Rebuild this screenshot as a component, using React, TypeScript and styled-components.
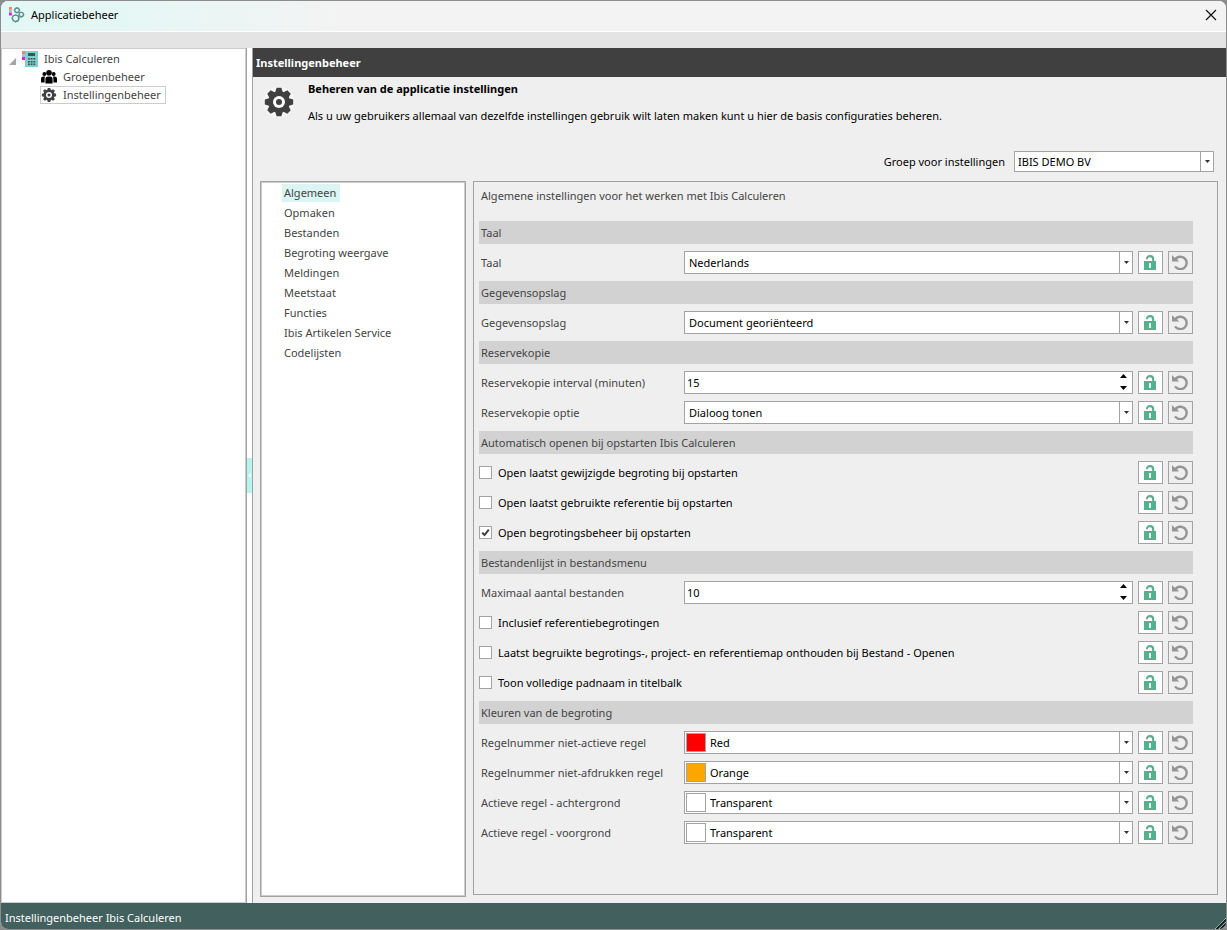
import React, { useState } from 'react';
import styled, { createGlobalStyle } from 'styled-components';

const line = '#a3a3a3';
const teal = '#41605e';

const Global = createGlobalStyle`
  *, *::before, *::after { box-sizing: border-box; }
  body {
    margin: 0;
    background: #8c8c8c;
    font-family: "Noto Sans", "Segoe UI", sans-serif;
    font-size: 11px;
    line-height: 18px;
    color: #000;
  }
  button, input, select { font: inherit; color: inherit; margin: 0; }
`;

const Window = styled.div`
  display: flex;
  flex-direction: column;
  min-height: 100vh;
  border: 1px solid #8c8c8c;
  border-radius: 8px;
  overflow: hidden;
  background: #efefef;
`;

const TitleBar = styled.header`
  display: flex;
  align-items: center;
  gap: 6px;
  height: 31px;
  padding: 0 9px 2px 8px;
  border-bottom: 1px solid #fff;
  background: linear-gradient(90deg, #e3f8f6 0, #e5f7f5 120px, #f3f3f3 340px);
`;

const WindowTitle = styled.h1`
  flex: 1;
  margin: 0;
  font-size: 11px;
  font-weight: 400;
`;

const CloseButton = styled.button`
  display: flex;
  padding: 0;
  border: 0;
  background: none;
`;

const ToolStrip = styled.div`
  height: 16px;
  background: #e4e4e4;
`;

const Body = styled.div`
  flex: 1;
  display: flex;
`;

const TreePane = styled.nav`
  width: 245px;
  padding: 1px 0 0 7px;
  border: 1px solid #ccc;
  background: #fff;
`;

const TreeRoot = styled.div`
  display: flex;
  align-items: center;
  gap: 6px;
  height: 18px;
  color: #444;
`;

const TreeChildren = styled.div`
  display: flex;
  flex-direction: column;
  align-items: flex-start;
  padding-left: 31px;
`;

const TreeItem = styled.button<{ $selected?: boolean }>`
  display: flex;
  align-items: center;
  gap: 6px;
  height: 18px;
  padding: 0 4px 0 0;
  border: 1px solid ${(p) => (p.$selected ? '#ccc' : 'transparent')};
  background: none;
  color: #444;
  line-height: 16px;
`;

const Splitter = styled.div`
  display: flex;
  align-items: center;
  width: 7px;
  border: solid ${line};
  border-width: 0 1px;
  background: #fff;
`;

const SplitterGrip = styled.button`
  display: flex;
  align-items: center;
  justify-content: center;
  width: 5px;
  height: 35px;
  padding: 0;
  border: 0;
  background: #b6f4ee;
`;

const Main = styled.main`
  flex: 1;
  min-width: 0;
  display: flex;
  flex-direction: column;
`;

const SectionBar = styled.h2`
  margin: 0;
  padding: 0 3px;
  background: #404040;
  color: #fff;
  font-size: 11px;
  font-weight: 700;
  line-height: 29px;
`;

const Intro = styled.div`
  display: flex;
  gap: 13px;
  padding: 3px 12px 0 10px;
`;

const IntroIcon = styled.div`
  padding-top: 6px;
  height: 45px;
`;

const IntroTitle = styled.h3`
  margin: 0;
  font-size: 11px;
  line-height: 18px;
`;

const IntroText = styled.p`
  margin: 9px 0 0;
`;

const GroupRow = styled.div`
  display: flex;
  align-items: center;
  justify-content: flex-end;
  gap: 9px;
  padding: 26px 12px 9px;
`;

const Columns = styled.div`
  flex: 1;
  display: flex;
  align-items: stretch;
  gap: 7px;
  padding: 0 8px 6px 7px;
`;

const CategoryList = styled.nav`
  display: flex;
  flex-direction: column;
  align-items: flex-start;
  gap: 2px;
  width: 206px;
  padding: 2px 21px;
  border: 1px solid ${line};
  background: #fff;
  box-shadow: inset 0 0 0 1px #ccc;
`;

const Category = styled.button<{ $active: boolean }>`
  height: 18px;
  padding: 0 4px 0 2px;
  border: 0;
  background: ${(p) => (p.$active ? '#daf5f3' : 'transparent')};
  color: #444;
  line-height: 18px;
`;

const Panel = styled.section`
  flex: 1;
  min-width: 0;
  margin-bottom: 2px;
  padding: 5px 24px 5px 5px;
  border: 1px solid ${line};
`;

const PanelIntro = styled.p`
  margin: 0 0 16px;
  padding-left: 2px;
  color: #444;
`;

const Rows = styled.div`
  display: grid;
  gap: 7px;
`;

const GroupHeading = styled.h4`
  margin: 0;
  padding-left: 2px;
  background: #d2d2d2;
  color: #444;
  font-size: 11px;
  font-weight: 400;
  line-height: 23px;
`;

const Row = styled.div`
  display: flex;
  align-items: center;
  gap: 5px;
  height: 23px;
`;

const RowLabel = styled.label`
  width: 200px;
  padding-left: 2px;
  color: #444;
  white-space: nowrap;
`;

const Field = styled.div<{ $width?: number }>`
  position: relative;
  display: flex;
  ${(p) => (p.$width ? `width: ${p.$width}px; height: 21px;` : 'flex: 1; height: 23px;')}
  border: 1px solid ${line};
  background: #fff;
`;

const Select = styled.select<{ $indent: number }>`
  flex: 1;
  appearance: none;
  padding: 0 16px 0 ${(p) => p.$indent}px;
  border: 0;
  border-radius: 0;
  background: transparent;
`;

const DropMark = styled.span`
  position: absolute;
  top: 0;
  right: 0;
  bottom: 0;
  display: flex;
  align-items: center;
  justify-content: center;
  width: 13px;
  border-left: 1px solid ${line};
  pointer-events: none;
`;

const Swatch = styled.span<{ $color: string }>`
  position: absolute;
  top: 1px;
  bottom: 1px;
  left: 1px;
  width: 20px;
  border: 1px solid ${line};
  background: ${(p) => p.$color};
  pointer-events: none;
`;

const NumberInput = styled.input`
  flex: 1;
  min-width: 0;
  padding: 0 2px;
  border: 0;
  background: transparent;
  appearance: textfield;
  &::-webkit-inner-spin-button { appearance: none; margin: 0; }
`;

const Spinner = styled.div`
  display: flex;
  flex-direction: column;
  justify-content: space-between;
  width: 17px;
  padding: 2px 0 3px;
`;

const SpinButton = styled.button`
  display: flex;
  justify-content: center;
  padding: 0;
  border: 0;
  background: none;
`;

const ToolButton = styled.button<{ $plain?: boolean }>`
  display: flex;
  align-items: center;
  justify-content: center;
  width: 25px;
  height: 23px;
  padding: 0;
  border: 1px solid ${line};
  background: ${(p) => (p.$plain ? 'transparent' : '#fff')};
`;

const CheckLabel = styled.label`
  flex: 1;
  display: flex;
  align-items: center;
  gap: 6px;
`;

const CheckHolder = styled.span`
  position: relative;
  display: flex;
`;

const CheckBox = styled.input`
  appearance: none;
  width: 13px;
  height: 13px;
  border: 1px solid ${line};
  background: #fff;
`;

const CheckMark = styled.svg`
  position: absolute;
  top: 2px;
  left: 2px;
  pointer-events: none;
`;

const StatusBar = styled.footer`
  display: flex;
  align-items: flex-end;
  height: 26px;
  padding-left: 4px;
  background: ${teal};
  color: #fff;
`;

const StatusText = styled.span`
  flex: 1;
  padding-bottom: 2px;
`;

const AppIcon = () => (
  <svg width="16" height="16" viewBox="0 0 17 17" fill="none" aria-hidden="true">
    <rect x="0" y="0" width="3" height="3" fill="#f0806c" />
    <rect x="0" y="3" width="3" height="3" fill="#8fc9cc" />
    <rect x="0" y="6" width="3" height="3" fill="#e01af0" />
    <g stroke="#5c918c" strokeWidth="1.5">
      <circle cx="8.5" cy="3.4" r="2.4" />
      <circle cx="13" cy="8" r="2.3" />
      <circle cx="7" cy="12" r="3.4" />
    </g>
    <g stroke="#5c918c" strokeWidth="1">
      <path d="M8.5 0v1M8.5 5.8v1M5 3.4h1M11 3.4h1M13 5v1M13 10.4v1M15.4 8h1M7 7.6v1M7 15.6v1M2.7 12h1M10.4 12h1M4 9l.7.7M10 9l-.7.7M4 15l.7-.7M10 15l-.7-.7" />
    </g>
  </svg>
);

const CalculatorIcon = () => (
  <svg width="16" height="16" viewBox="0 0 16 16" aria-hidden="true">
    <rect x="3" y="0" width="13" height="16" fill="#7fd0cb" />
    <rect x="0" y="0" width="3" height="3" fill="#f0806c" />
    <rect x="0" y="3" width="3" height="3" fill="#b9b3e8" />
    <rect x="0" y="6" width="3" height="3" fill="#e01af0" />
    <rect x="6" y="2" width="7" height="3" fill="#3d5452" />
    <g fill="#3d5452">
      {[7, 10, 12.5].map((y) =>
        [6, 8.7, 11.4].map((x) => <rect key={`${x}-${y}`} x={x} y={y} width="1.8" height="1.6" />),
      )}
    </g>
  </svg>
);

const PeopleIcon = () => (
  <svg width="16" height="16" viewBox="0 0 16 16" aria-hidden="true">
    <circle cx="3.4" cy="5" r="2" />
    <circle cx="12.6" cy="5" r="2" />
    <path d="M0 13.5V9.8Q0 7.6 2.2 7.6H4.2Q3.6 8.6 3.6 10V13.5ZM16 13.5V9.8Q16 7.6 13.8 7.6H11.8Q12.4 8.6 12.4 10V13.5Z" />
    <circle cx="8" cy="3.8" r="2.8" />
    <path d="M4.4 14.5V10Q4.4 7.4 7 7.4H9Q11.6 7.4 11.6 10V14.5Z" />
  </svg>
);

const GearIcon = ({ size, halo }: { size: number; halo?: boolean }) => (
  <svg width={size} height={size} viewBox="-16 -16 32 32" aria-hidden="true">
    {halo && <circle r="15.5" fill="#f6f6f6" />}
    <g fill="#404040">
      <circle r="10.8" />
      {[0, 45, 90, 135, 180, 225, 270, 315].map((a) => (
        <path key={a} d="M-4-9L-2.4-14.2H2.4L4-9Z" transform={`rotate(${a})`} />
      ))}
    </g>
    <circle r="6" fill="#fff" />
    <circle r="3" fill="#404040" />
  </svg>
);

const LockIcon = () => (
  <svg width="13" height="15" viewBox="0 0 13 15" aria-hidden="true">
    <path d="M3 4.2Q3 1.1 6 1.1Q9.2 1.1 9.2 4.4V7" fill="none" stroke="#55b08c" strokeWidth="2.1" />
    <rect y="6" width="12" height="9" fill="#55b08c" />
    <rect x="5" y="8" width="2" height="5" fill="#e8f7f1" />
  </svg>
);

const UndoIcon = () => (
  <svg width="17" height="15" viewBox="0 0 17 15" aria-hidden="true">
    <path d="M3 4.4A6.4 6.2 0 1 1 3 11.4" fill="none" stroke="#959595" strokeWidth="2.4" />
    <path d="M0 0L2.4 2.6L5.4 4.4L7 6.6H0Z" fill="#959595" />
  </svg>
);

const DownArrow = () => (
  <svg width="5" height="3" viewBox="0 0 5 3" aria-hidden="true">
    <path d="M0 0H5L2.5 3Z" fill="#333" />
  </svg>
);

const Drop = () => (
  <DropMark>
    <DownArrow />
  </DropMark>
);

const RowTools = () => (
  <>
    <ToolButton type="button" aria-label="Vergrendelen">
      <LockIcon />
    </ToolButton>
    <ToolButton type="button" $plain aria-label="Herstellen">
      <UndoIcon />
    </ToolButton>
  </>
);

type RowProps = { id: string; label: string; value: string };

const SelectRow = ({ id, label, value, color }: RowProps & { color?: string }) => (
  <Row>
    <RowLabel htmlFor={id}>{label}</RowLabel>
    <Field>
      <Select id={id} $indent={color ? 25 : 4}>
        <option>{value}</option>
      </Select>
      {color && <Swatch $color={color} />}
      <Drop />
    </Field>
    <RowTools />
  </Row>
);

const NumberRow = ({ id, label, value }: RowProps) => {
  const [n, setN] = useState(Number(value));
  return (
    <Row>
      <RowLabel htmlFor={id}>{label}</RowLabel>
      <Field>
        <NumberInput id={id} type="number" value={n} onChange={(e) => setN(Number(e.target.value))} />
        <Spinner>
          <SpinButton type="button" aria-label="Verhogen" onClick={() => setN(n + 1)}>
            <svg width="7" height="4" viewBox="0 0 7 4">
              <path d="M0 4H7L3.5 0Z" />
            </svg>
          </SpinButton>
          <SpinButton type="button" aria-label="Verlagen" onClick={() => setN(n - 1)}>
            <svg width="7" height="4" viewBox="0 0 7 4">
              <path d="M0 0H7L3.5 4Z" />
            </svg>
          </SpinButton>
        </Spinner>
      </Field>
      <RowTools />
    </Row>
  );
};

const CheckRow = ({ label, initial = false }: { label: string; initial?: boolean }) => {
  const [on, setOn] = useState(initial);
  return (
    <Row>
      <CheckLabel>
        <CheckHolder>
          <CheckBox type="checkbox" checked={on} onChange={() => setOn(!on)} />
          {on && (
            <CheckMark width="9" height="9" viewBox="0 0 9 9">
              <path d="M1.2 4.6L3.5 7L7.8 1.6" fill="none" stroke="#404040" strokeWidth="2" />
            </CheckMark>
          )}
        </CheckHolder>
        {label}
      </CheckLabel>
      <RowTools />
    </Row>
  );
};

const categories = [
  'Algemeen',
  'Opmaken',
  'Bestanden',
  'Begroting weergave',
  'Meldingen',
  'Meetstaat',
  'Functies',
  'Ibis Artikelen Service',
  'Codelijsten',
];

export default function App() {
  const [active, setActive] = useState(categories[0]);
  return (
    <>
      <Global />
      <Window>
        <TitleBar>
          <AppIcon />
          <WindowTitle>Applicatiebeheer</WindowTitle>
          <CloseButton type="button" aria-label="Sluiten">
            <svg width="12" height="12" viewBox="0 0 12 12">
              <path d="M1 1L11 11M11 1L1 11" stroke="#111" strokeWidth="1.2" />
            </svg>
          </CloseButton>
        </TitleBar>
        <ToolStrip />
        <Body>
          <TreePane>
            <TreeRoot>
              <svg width="7" height="18" viewBox="0 0 7 18" aria-hidden="true">
                <path d="M7 8V15H0Z" fill="#a6a6a6" />
              </svg>
              <CalculatorIcon />
              Ibis Calculeren
            </TreeRoot>
            <TreeChildren>
              <TreeItem type="button">
                <PeopleIcon />
                Groepenbeheer
              </TreeItem>
              <TreeItem type="button" $selected>
                <GearIcon size={16} />
                Instellingenbeheer
              </TreeItem>
            </TreeChildren>
          </TreePane>
          <Splitter>
            <SplitterGrip type="button" aria-label="Inklappen">
              <svg width="3" height="5" viewBox="0 0 3 5">
                <path d="M3 0V5L0 2.5Z" fill="#fff" />
              </svg>
            </SplitterGrip>
          </Splitter>
          <Main>
            <SectionBar>Instellingenbeheer</SectionBar>
            <Intro>
              <IntroIcon>
                <GearIcon size={32} halo />
              </IntroIcon>
              <div>
                <IntroTitle>Beheren van de applicatie instellingen</IntroTitle>
                <IntroText>
                  Als u uw gebruikers allemaal van dezelfde instellingen gebruik wilt laten maken kunt u hier de basis
                  configuraties beheren.
                </IntroText>
              </div>
            </Intro>
            <GroupRow>
              <label htmlFor="group">Groep voor instellingen</label>
              <Field $width={200}>
                <Select id="group" $indent={3}>
                  <option>IBIS DEMO BV</option>
                </Select>
                <Drop />
              </Field>
            </GroupRow>
            <Columns>
              <CategoryList>
                {categories.map((c) => (
                  <Category key={c} type="button" $active={c === active} onClick={() => setActive(c)}>
                    {c}
                  </Category>
                ))}
              </CategoryList>
              <Panel>
                <PanelIntro>Algemene instellingen voor het werken met Ibis Calculeren</PanelIntro>
                <Rows>
                  <GroupHeading>Taal</GroupHeading>
                  <SelectRow id="language" label="Taal" value="Nederlands" />
                  <GroupHeading>Gegevensopslag</GroupHeading>
                  <SelectRow id="storage" label="Gegevensopslag" value="Document georiënteerd" />
                  <GroupHeading>Reservekopie</GroupHeading>
                  <NumberRow id="interval" label="Reservekopie interval (minuten)" value="15" />
                  <SelectRow id="backup" label="Reservekopie optie" value="Dialoog tonen" />
                  <GroupHeading>Automatisch openen bij opstarten Ibis Calculeren</GroupHeading>
                  <CheckRow label="Open laatst gewijzigde begroting bij opstarten" />
                  <CheckRow label="Open laatst gebruikte referentie bij opstarten" />
                  <CheckRow label="Open begrotingsbeheer bij opstarten" initial />
                  <GroupHeading>Bestandenlijst in bestandsmenu</GroupHeading>
                  <NumberRow id="maximum" label="Maximaal aantal bestanden" value="10" />
                  <CheckRow label="Inclusief referentiebegrotingen" />
                  <CheckRow label="Laatst begruikte begrotings-, project- en referentiemap onthouden bij Bestand - Openen" />
                  <CheckRow label="Toon volledige padnaam in titelbalk" />
                  <GroupHeading>Kleuren van de begroting</GroupHeading>
                  <SelectRow id="inactive" label="Regelnummer niet-actieve regel" value="Red" color="#ff0000" />
                  <SelectRow id="noprint" label="Regelnummer niet-afdrukken regel" value="Orange" color="#ffa500" />
                  <SelectRow id="background" label="Actieve regel - achtergrond" value="Transparent" color="#fff" />
                  <SelectRow id="foreground" label="Actieve regel - voorgrond" value="Transparent" color="#fff" />
                </Rows>
              </Panel>
            </Columns>
          </Main>
        </Body>
        <StatusBar>
          <StatusText>Instellingenbeheer Ibis Calculeren</StatusText>
          <svg width="12" height="12" viewBox="0 0 12 12" aria-hidden="true">
            <path d="M1 12L12 1M5 12L12 5M9 12L12 9" stroke="#a9bfbd" strokeWidth="1" />
            <path d="M2.5 12L12 2.5M6.5 12L12 6.5" stroke="#101d1c" strokeWidth="1.6" />
          </svg>
        </StatusBar>
      </Window>
    </>
  );
}
